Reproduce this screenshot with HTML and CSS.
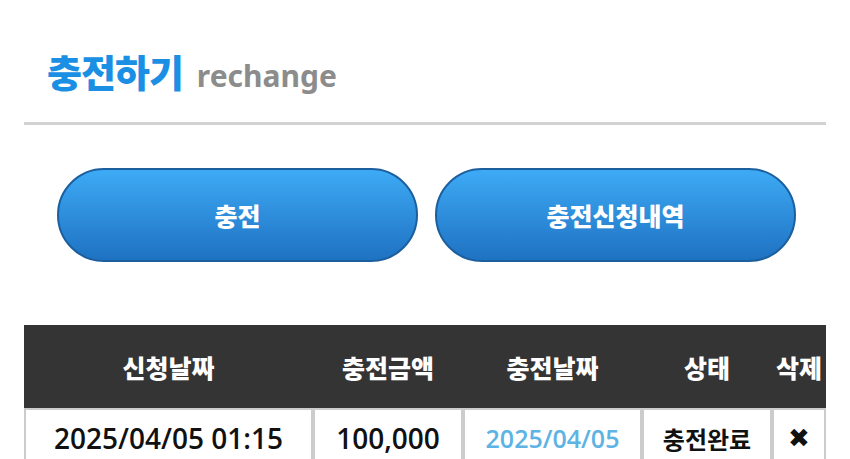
FILE: index.html
```html
<!DOCTYPE html>
<html lang="ko">
  <head>
    <meta charset="UTF-8" />
    <meta name="viewport" content="width=device-width, initial-scale=1.0" />
    <title>충전하기</title>
    <link rel="stylesheet" href="styles.css">
  </head>
  <body>
    <div class="page">
      <div class="page__title">
        <h2>충전하기</h2>
        <span class="page__sub">rechange</span>
      </div>

      <div class="tabs">
        <button class="tabs__button" type="button">충전</button>
        <button class="tabs__button" type="button">충전신청내역</button>
      </div>

      <table class="history">
        <thead>
          <tr>
            <th class="col_req">신청날짜</th>
            <th class="col_amount">충전금액</th>
            <th class="col_date">충전날짜</th>
            <th class="col_state">상태</th>
            <th class="col_del">삭제</th>
          </tr>
        </thead>
        <tbody>
          <tr>
            <td>2025/04/05 01:15</td>
            <td>100,000</td>
            <td class="history__date">2025/04/05</td>
            <td class="history__state">충전완료</td>
            <td class="history__del">&#10006;</td>
          </tr>
        </tbody>
      </table>
    </div>
  </body>
</html>
```

FILE: styles.css
```css
body {
  margin: 0;
  background: #ffffff;
  font-family: "Noto Sans CJK KR", "Noto Sans", sans-serif;
}
.page {
  padding: 0 24px;
}
/* title */
.page__title {
  display: flex;
  align-items: baseline;
  gap: 14px;
  padding: 48px 0 26px 23px;
  border-bottom: 3px solid #d2d2d2;
}
.page__title h2 {
  margin: 0;
  font-size: 38px;
  font-weight: 900;
  color: #1b8fe3;
  letter-spacing: -1px;
  line-height: 1.2;
}
.page__sub {
  font-family: "Noto Sans", sans-serif;
  font-size: 30px;
  font-weight: 700;
  color: #8c8c8c;
}
/* buttons */
.tabs {
  display: flex;
  gap: 17px;
  padding: 43px 0 0 33px;
}
.tabs__button {
  box-sizing: border-box;
  width: 361px;
  height: 94px;
  border: 2px solid #1c5f9f;
  border-radius: 47px;
  background: linear-gradient(to bottom, #3eaaf5, #1e72c2);
  color: #ffffff;
  font-family: "Noto Sans CJK KR", sans-serif;
  font-size: 25px;
  font-weight: 900;
  cursor: pointer;
}
/* table */
.history {
  width: 802px;
  margin-top: 63px;
  border-spacing: 0;
  table-layout: fixed;
}
.history th {
  height: 83px;
  padding: 0;
  background: #343434;
  color: #ffffff;
  font-size: 25px;
  font-weight: 900;
}
.col_req { width: 289px; }
.col_amount { width: 150px; }
.col_date { width: 179px; }
.col_state { width: 130px; }
.col_del { width: 54px; }
.history td {
  height: 56px;
  padding: 0;
  border: 2px solid #cccccc;
  text-align: center;
  font-family: "Open Sans", "Noto Sans CJK KR", sans-serif;
  font-size: 28px;
  font-weight: 600;
  color: #111111;
}
.history td.history__date {
  font-size: 25px;
  color: #5db4e4;
}
.history td.history__state {
  font-size: 24px;
  font-weight: 700;
}
.history td.history__del {
  font-family: "DejaVu Sans", sans-serif;
  font-size: 26px;
}
```
